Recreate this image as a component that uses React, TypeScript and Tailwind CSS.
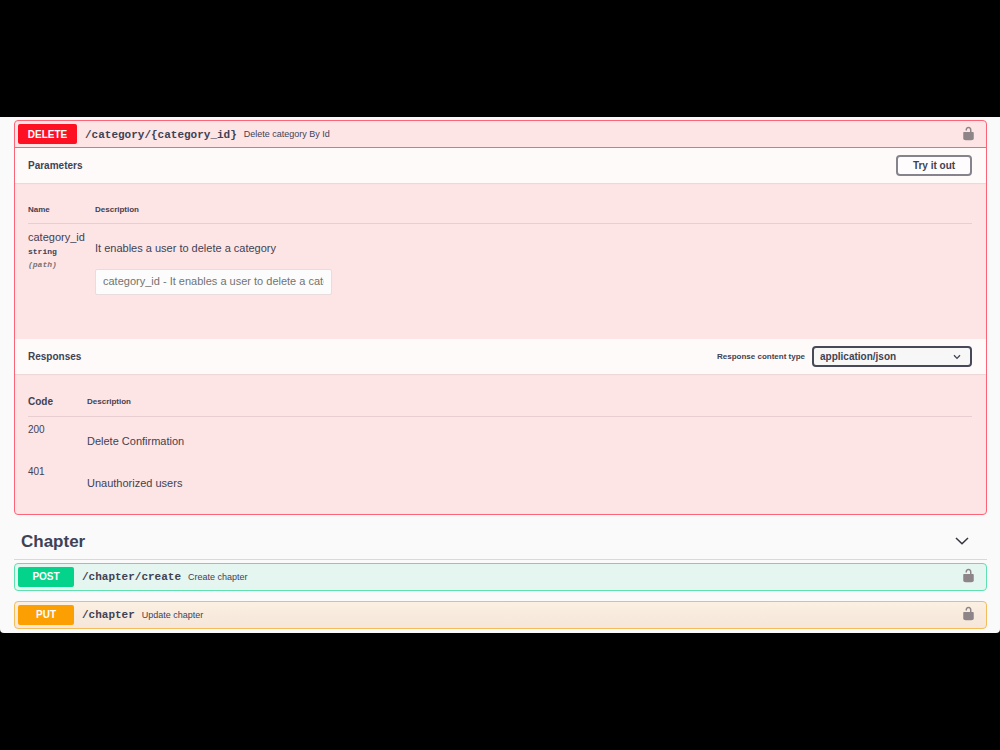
import { ReactNode } from 'react';

function Unlock() {
  return (
    <svg viewBox="0 0 20 20" className="mb-0.5 h-[15px] w-[15px] fill-[#8d8587]" aria-hidden="true">
      <path d="M15.8 8H14V5.6C14 2.703 12.665 1 10 1 7.334 1 6 2.703 6 5.6V6h2v-.801C8 3.754 8.797 3 10 3c1.203 0 2 .754 2 2.199V8H4c-.553 0-1 .646-1 1.199V17c0 .549.428 1.139.951 1.307l1.197.387C5.672 18.861 6.55 19 7.1 19h5.8c.549 0 1.428-.139 1.951-.307l1.196-.387c.524-.167.953-.757.953-1.306V9.199C17 8.646 16.352 8 15.8 8z" />
    </svg>
  );
}

type SummaryProps = { method: string; path: string; title: string; badge: string };

function Summary({ method, path, title, badge }: SummaryProps) {
  return (
    <div className="flex h-[26px] items-center pl-[3px] pr-2.5">
      <span className={`flex h-5 items-center justify-center rounded-xs text-[10px] font-bold text-white ${badge}`}>
        {method}
      </span>
      <span className="ml-2 pt-0.5 font-['Liberation_Mono',monospace] text-[11px] font-bold">{path}</span>
      <span className="ml-[7px] grow pt-0.5 text-[9px]">{title}</span>
      <button type="button" aria-label={`Authorize ${method} ${path}`}>
        <Unlock />
      </button>
    </div>
  );
}

function SectionBar({ title, children }: { title: string; children: ReactNode }) {
  return (
    <div className="flex h-[35px] items-center bg-[#fefaf9] pl-[13px] pr-3.5 shadow-[0_1px_1px_rgba(0,0,0,0.06)]">
      <h4 className="grow text-[10px] font-bold">{title}</h4>
      {children}
    </div>
  );
}

const responses = [
  { code: '200', text: 'Delete Confirmation' },
  { code: '401', text: 'Unauthorized users' },
];

export default function App() {
  return (
    <div className="min-h-screen bg-black py-[117px] font-['Liberation_Sans',Arial,sans-serif] text-[#3f4254]">
      <main className="rounded-b-sm bg-[#fafafa] pb-1 pl-3.5 pr-[13px] pt-[3px]">
        <section className="rounded-sm border border-[#fb6577] bg-[#fde5e5]">
          <div className="border-b border-[#fb6577]">
            <Summary
              method="DELETE"
              path="/category/{category_id}"
              title="Delete category By Id"
              badge="w-[59px] bg-[#fd1022]"
            />
          </div>
          <SectionBar title="Parameters">
            <button
              type="button"
              className="h-[21px] w-[76px] rounded-sm border-2 border-[#86838c] bg-[#fefcfc] text-[10px] font-bold"
            >
              Try it out
            </button>
          </SectionBar>
          <div className="pb-11 pl-[13px] pr-3.5 pt-5">
            <table className="w-full text-left">
              <thead>
                <tr className="border-b border-[#e8cdd1] text-[8px] leading-[14px]">
                  <th className="w-[67px] pb-1.5">Name</th>
                  <th className="pb-1.5">Description</th>
                </tr>
              </thead>
              <tbody>
                <tr className="align-top">
                  <td className="pt-1.5">
                    <div className="text-[11px] leading-[14px]">category_id</div>
                    <div className="font-['Liberation_Mono',monospace] text-[8px] font-bold leading-4">string</div>
                    <div className="font-['Liberation_Mono',monospace] text-[8px] font-bold italic leading-[10px] text-[#77747b]">
                      (path)
                    </div>
                  </td>
                  <td className="pt-[17px]">
                    <p className="text-[11px] leading-[14px]">It enables a user to delete a category</p>
                    <input
                      type="text"
                      aria-label="category_id"
                      placeholder="category_id - It enables a user to delete a category"
                      className="mt-3.5 block h-[26px] w-[237px] rounded-xs border border-[#e9dcdc] bg-[#fdfcfc] px-[7px] pb-0.5 text-[11px] placeholder:text-[#737373]"
                    />
                  </td>
                </tr>
              </tbody>
            </table>
          </div>
          <SectionBar title="Responses">
            <label htmlFor="content-type" className="mr-[7px] text-[8px] font-bold">
              Response content type
            </label>
            <div className="grid items-center">
              <select
                id="content-type"
                className="col-start-1 row-start-1 h-[21px] w-40 appearance-none rounded-sm border-2 border-[#474958] bg-[#f7f7f7] px-1.5 text-[10px] font-bold"
              >
                <option>application/json</option>
              </select>
              <svg
                viewBox="0 0 8 6"
                className="pointer-events-none col-start-1 row-start-1 mr-[11px] h-1.5 w-2 justify-self-end fill-none stroke-[#3f4254] stroke-[1.3]"
                aria-hidden="true"
              >
                <path d="M1 1.2 4 4.4 7 1.2" />
              </svg>
            </div>
          </SectionBar>
          <div className="pb-[13px] pl-[13px] pr-3.5 pt-[21px]">
            <table className="w-full text-left">
              <thead>
                <tr className="border-b border-[#e8cdd1] leading-[14px]">
                  <th className="w-[59px] pb-[7px] text-[10px]">Code</th>
                  <th className="pb-[7px] text-[8px]">Description</th>
                </tr>
              </thead>
              <tbody>
                {responses.map(({ code, text }) => (
                  <tr key={code} className="h-[42px] align-top">
                    <td className="pt-1.5 text-[10px] leading-[14px]">{code}</td>
                    <td className="pt-[17px] text-[11px] leading-[14px]">{text}</td>
                  </tr>
                ))}
              </tbody>
            </table>
          </div>
        </section>

        <div className="mt-2 flex h-[37px] items-center border-b border-[#d9d9dc] pl-[7px] pr-[18px]">
          <h3 className="grow pt-0.5 text-[17px] font-bold">Chapter</h3>
          <button type="button" aria-label="Collapse Chapter">
            <svg viewBox="0 0 14 8" className="h-2 w-3.5 fill-none stroke-[#35363d] stroke-[1.5]" aria-hidden="true">
              <path d="M1 1 7 6.8 13 1" />
            </svg>
          </button>
        </div>
        <div className="mt-[3px] rounded-sm border border-[#5fe0b1] bg-[#e5f5ef]">
          <Summary method="POST" path="/chapter/create" title="Create chapter" badge="w-14 bg-[#04d38b]" />
        </div>
        <div className="mt-2.5 rounded-sm border border-[#f3bd5c] bg-linear-to-b from-[#fbf0e2] to-[#f5e6d9]">
          <Summary method="PUT" path="/chapter" title="Update chapter" badge="w-14 bg-[#fc9f03]" />
        </div>
      </main>
    </div>
  );
}
